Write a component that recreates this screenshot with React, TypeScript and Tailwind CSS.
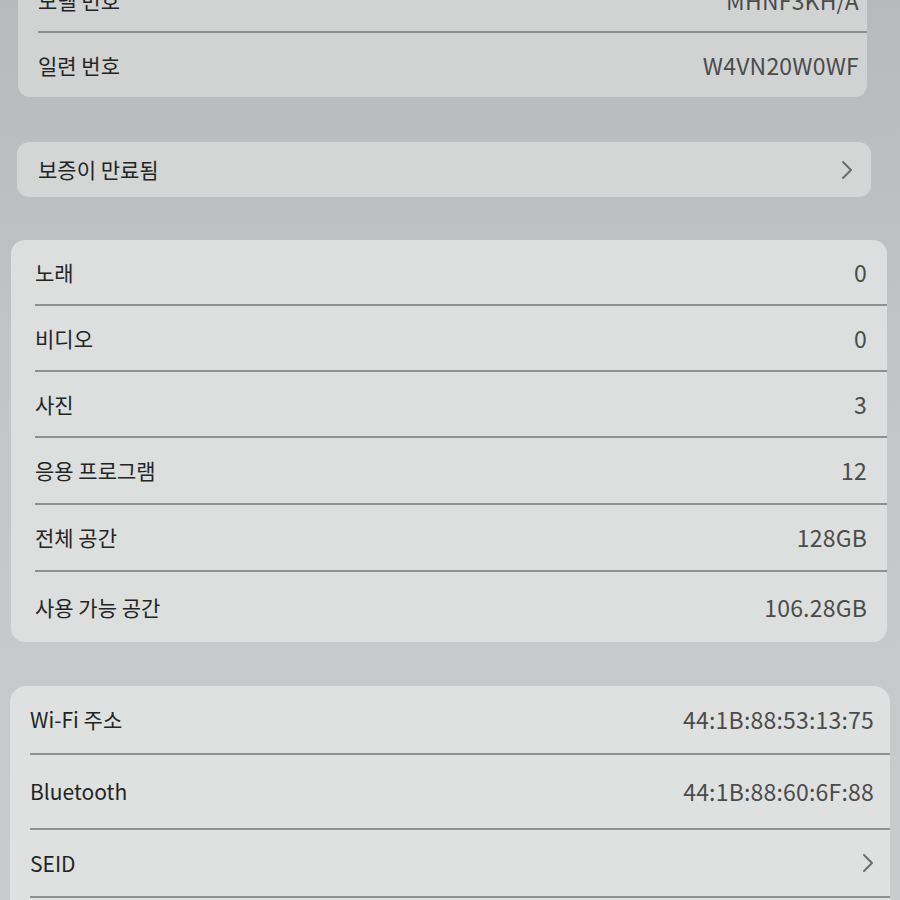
import React from "react";

type Row = { label: string; value?: string; chevron?: boolean; h: number; sep?: boolean };

function Chevron() {
  return (
    <svg width="12" height="20" viewBox="0 0 12 20" fill="none">
      <path d="M2 2 L10 10 L2 18" stroke="#6b6d6d" strokeWidth="2" strokeLinecap="round" strokeLinejoin="round" />
    </svg>
  );
}

function Card({ rows, className, padL, padR }: { rows: Row[]; className: string; padL: string; padR: string }) {
  return (
    <div className={`shrink-0 ${className}`}>
      {rows.map((r, i) => (
        <div key={i} className={`flex flex-col shrink-0 ${padL}`} style={{ height: r.h }}>
          <div className={`flex flex-1 items-center justify-between ${padR}`}>
            <span className="text-[21px] leading-none text-[#232525]">{r.label}</span>
            {r.value && <span className="text-[23px] leading-none tracking-[0.2px] text-[#4a4c4c]">{r.value}</span>}
            {r.chevron && <Chevron />}
          </div>
          {r.sep && <div className="h-[2px] shrink-0 bg-[#8e9090]" />}
        </div>
      ))}
    </div>
  );
}

export default function App() {
  return (
    <div
      className="w-[900px] h-[900px] overflow-hidden bg-gradient-to-b from-[#b7b9ba] via-[#c4c6c7] to-[#c9cbcc] flex flex-col"
      style={{ fontFamily: '"Noto Sans CJK KR", "Noto Sans", sans-serif' }}
    >
      <Card
        className="mt-[-31px] ml-[18px] w-[849px] rounded-[12px] bg-[#d1d3d2] overflow-hidden"
        padL="pl-[20px]"
        padR="pr-[8px]"
        rows={[
          { label: "모델 번호", value: "MHNF3KH/A", h: 64, sep: true },
          { label: "일련 번호", value: "W4VN20W0WF", h: 64 },
        ]}
      />
      <Card
        className="mt-[45px] ml-[17px] w-[854px] rounded-[12px] bg-[#d4d6d5] overflow-hidden"
        padL="pl-[21px]"
        padR="pr-[18px]"
        rows={[{ label: "보증이 만료됨", chevron: true, h: 55 }]}
      />
      <Card
        className="mt-[43px] ml-[11px] w-[876px] rounded-[14px] bg-[#dcdfdd] overflow-hidden"
        padL="pl-[24px]"
        padR="pr-[20px]"
        rows={[
          { label: "노래", value: "0", h: 66, sep: true },
          { label: "비디오", value: "0", h: 66, sep: true },
          { label: "사진", value: "3", h: 66, sep: true },
          { label: "응용 프로그램", value: "12", h: 67, sep: true },
          { label: "전체 공간", value: "128GB", h: 67, sep: true },
          { label: "사용 가능 공간", value: "106.28GB", h: 70 },
        ]}
      />
      <Card
        className="mt-[44px] ml-[10px] w-[880px] rounded-t-[16px] bg-[#dfe1e0] overflow-hidden"
        padL="pl-[20px]"
        padR="pr-[16px]"
        rows={[
          { label: "Wi-Fi 주소", value: "44:1B:88:53:13:75", h: 69, sep: true },
          { label: "Bluetooth", value: "44:1B:88:60:6F:88", h: 75, sep: true },
          { label: "SEID", chevron: true, h: 68, sep: true },
          { label: "", h: 40 },
        ]}
      />
    </div>
  );
}
